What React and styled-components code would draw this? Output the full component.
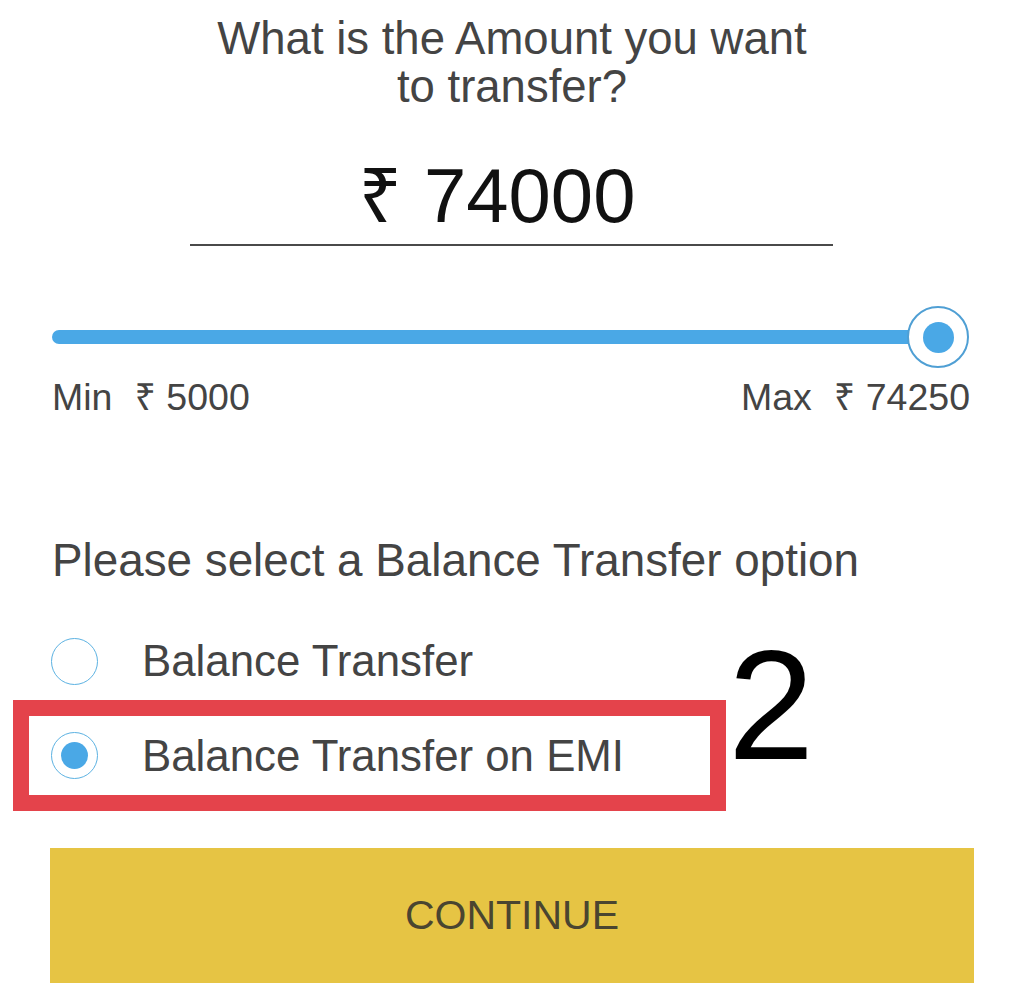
import React, { useState } from 'react'
import styled, { createGlobalStyle } from 'styled-components'

const GlobalStyle = createGlobalStyle`
    body {
        margin: 0;
        background: #fff;
        font-family: "Liberation Sans", "Noto Sans", "DejaVu Sans", sans-serif;
    }
`

const colors = {
    text: '#444444',
    blue: '#4aa8e6',
    blueLine: '#5cb2e2',
    red: '#e4434b',
    yellow: '#e6c444',
    buttonText: '#4a4530',
}

const options = [
    { id: 1, title: 'Balance Transfer' },
    { id: 2, title: 'Balance Transfer on EMI' },
]

export default function App() {
    const [selected, setSelected] = useState(2)
    const min = 5000
    const max = 74250
    const amount = 74000

    return (
        <>
            <GlobalStyle />
            <Page>
                <Heading>
                    What is the Amount you want
                    <br />
                    to transfer?
                </Heading>
                <AmountField>
                    <Currency>₹</Currency>
                    {amount}
                </AmountField>

                <Slider>
                    <Track />
                    <Thumb>
                        <ThumbDot />
                    </Thumb>
                </Slider>
                <Limits>
                    <Limit>
                        Min<Rupee>₹ {min}</Rupee>
                    </Limit>
                    <Limit>
                        Max<Rupee>₹ {max}</Rupee>
                    </Limit>
                </Limits>

                <Question>Please select a Balance Transfer option</Question>

                {options.map(option => {
                    const isSelected = selected === option.id
                    const row = (
                        <Option onClick={() => setSelected(option.id)}>
                            <Radio>{isSelected && <RadioDot />}</Radio>
                            <OptionLabel>{option.title}</OptionLabel>
                        </Option>
                    )
                    return isSelected ? (
                        <Highlight key={option.id}>
                            {row}
                            <StepNumber>2</StepNumber>
                        </Highlight>
                    ) : (
                        <Plain key={option.id}>{row}</Plain>
                    )
                })}

                <Button>CONTINUE</Button>
            </Page>
        </>
    )
}

const Page = styled.div`
    display: flex;
    flex-direction: column;
    padding: 15px 50px 0 52px;
    color: ${colors.text};
`

const Heading = styled.div`
    font-size: 45.5px;
    line-height: 48px;
    text-align: center;
    margin-left: -2px;
`

const AmountField = styled.div`
    align-self: center;
    width: 643px;
    margin-top: 40px;
    margin-left: -4px;
    padding-right: 28px;
    box-sizing: border-box;
    font-size: 76px;
    line-height: 90px;
    text-align: center;
    color: #111;
    padding-bottom: 3px;
    border-bottom: 2px solid #4a4a4a;
`

const Currency = styled.span`
    margin-right: 22px;
`

const Slider = styled.div`
    position: relative;
    display: flex;
    align-items: center;
    height: 60px;
    margin-top: 61px;
    margin-right: 5px;
`

const Track = styled.div`
    flex: 1;
    height: 14px;
    margin-right: 30px;
    border-radius: 7px;
    background-color: ${colors.blue};
`

const Thumb = styled.div`
    position: absolute;
    right: 0;
    top: -1px;
    width: 58px;
    height: 58px;
    border-radius: 50%;
    border: 2px solid #4f9fd4;
    background-color: #fff;
    display: flex;
    align-items: center;
    justify-content: center;
`

const ThumbDot = styled.span`
    width: 31px;
    height: 31px;
    border-radius: 50%;
    background-color: ${colors.blue};
`

const Limits = styled.div`
    display: flex;
    justify-content: space-between;
    margin-top: 9px;
    margin-right: 4px;
    font-size: 37.5px;
    line-height: 42px;
`

const Limit = styled.span`
    display: flex;
`

const Rupee = styled.span`
    margin-left: 22px;
`

const Question = styled.div`
    margin-top: 118px;
    font-size: 45.8px;
    line-height: 50px;
`

const Plain = styled.div`
    margin-top: 51px;
    margin-left: -1px;
`

const Highlight = styled.div`
    position: relative;
    align-self: flex-start;
    width: 713px;
    box-sizing: border-box;
    margin-top: 15px;
    margin-left: -39px;
    border: 16px solid ${colors.red};
    padding-left: 22px;
`

const Option = styled.div`
    display: flex;
    align-items: center;
    height: 79px;
    cursor: pointer;

    ${Plain} & {
        height: 48px;
    }
`

const Radio = styled.span`
    flex: none;
    width: 45px;
    height: 45px;
    border-radius: 50%;
    border: 1.5px solid ${colors.blueLine};
    display: flex;
    align-items: center;
    justify-content: center;
    margin-right: 44px;
`

const RadioDot = styled.span`
    width: 27px;
    height: 27px;
    border-radius: 50%;
    background-color: ${colors.blue};
`

const OptionLabel = styled.span`
    font-size: 43.8px;
    line-height: 48px;
`

const StepNumber = styled.span`
    position: absolute;
    left: calc(100% + 18px);
    top: -88px;
    font-size: 155px;
    line-height: 155px;
    color: #000;
`

const Button = styled.div`
    display: flex;
    align-items: center;
    justify-content: center;
    height: 135px;
    margin-top: 37px;
    margin-left: -2px;
    background-color: ${colors.yellow};
    color: ${colors.buttonText};
    font-size: 41px;
    cursor: pointer;

    &:hover {
        opacity: 0.9;
    }
`
